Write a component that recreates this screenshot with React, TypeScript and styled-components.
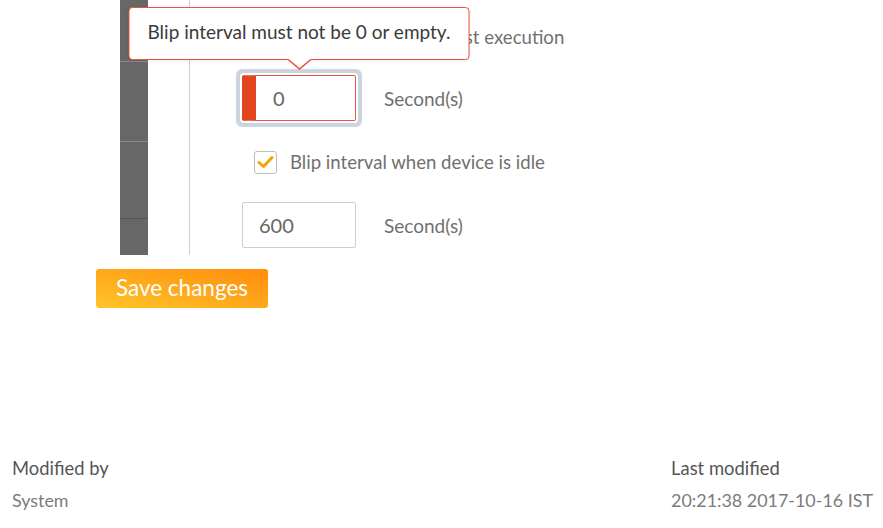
import React from "react";
import styled, { createGlobalStyle } from "styled-components";

const GlobalStyle = createGlobalStyle`
  html, body {
    margin: 0;
    padding: 0;
    background: #ffffff;
  }
  body {
    font-family: Lato, "Open Sans", sans-serif;
    color: #666;
  }
  * { box-sizing: border-box; }
`;

const Page = styled.div`
  display: flex;
  flex-direction: column;
  height: 528px;
  overflow: hidden;
`;

const FormArea = styled.div`
  display: flex;
  padding-left: 120px;
  height: 255px;
`;

const SideStrip = styled.div`
  width: 28px;
  display: flex;
  flex-direction: column;
  background: #666;
`;

const SideItem = styled.div<{ $h: number; $line: string }>`
  height: ${(p) => p.$h}px;
  background: #676767;
  border-top: 1px solid ${(p) => p.$line};
  &:first-child { border-top: none; }
`;

const Settings = styled.div`
  position: relative;
  margin-left: 41px;
  border-left: 1px solid #cfcfcf;
  padding: 25px 0 0 52px;
  flex: 1;
  display: flex;
  flex-direction: column;
`;

const CheckRow = styled.label<{ $mt: number }>`
  display: flex;
  align-items: center;
  gap: 13px;
  margin-left: 12px;
  margin-top: ${(p) => p.$mt}px;
  height: 24px;
  font-size: 18.6px;
  color: #707070;
  white-space: nowrap;
`;

const Box = styled.span`
  width: 23px;
  height: 23px;
  flex: none;
  border: 1px solid #bdbdbd;
  border-radius: 3px;
  background: #fff;
  display: flex;
  align-items: center;
  justify-content: center;
`;

const InputRow = styled.div<{ $mt: number }>`
  display: flex;
  align-items: center;
  gap: 28px;
  margin-top: ${(p) => p.$mt}px;
  height: 46px;
`;

const InputWrap = styled.div`
  position: relative;
  width: 114px;
  height: 46px;
`;

const Field = styled.div<{ $error?: boolean }>`
  width: 114px;
  height: 46px;
  border: 1px solid ${(p) => (p.$error ? "#e8553e" : "#cfcfcf")};
  border-left: ${(p) => (p.$error ? "14px solid #e3451f" : "1px solid #cfcfcf")};
  border-radius: 2px;
  padding-left: ${(p) => (p.$error ? "17px" : "16px")};
  display: flex;
  align-items: center;
  font-size: 20px;
  color: #666;
  background: #fff;
  box-shadow: ${(p) =>
    p.$error ? "0 0 0 2px #fff, 0 0 1px 6px #cbd4de" : "none"};
`;

const Unit = styled.span`
  font-size: 19px;
  color: #707070;
`;

const Tooltip = styled.div`
  position: absolute;
  left: 50%;
  bottom: calc(100% + 15px);
  transform: translateX(-50%);
  width: 341px;
  height: 53px;
  padding-bottom: 4px;
  border: 1px solid #e8553e;
  border-radius: 4px;
  background: #fff;
  display: flex;
  align-items: center;
  justify-content: center;
  font-size: 19px;
  color: #3a3a3a;
  white-space: nowrap;
  z-index: 5;
  box-shadow: 0 1px 3px rgba(0, 0, 0, 0.08);

  &::before,
  &::after {
    content: "";
    position: absolute;
    left: 50%;
    transform: translateX(-50%);
    border-style: solid;
  }
  &::before {
    top: 100%;
    border-width: 11px 13px 0 13px;
    border-color: #e8553e transparent transparent transparent;
  }
  &::after {
    top: calc(100% - 1px);
    border-width: 10px 12px 0 12px;
    border-color: #fff transparent transparent transparent;
  }
`;

const ButtonRow = styled.div`
  padding-left: 96px;
  margin-top: 14px;
`;

const SaveButton = styled.button`
  width: 172px;
  height: 39px;
  border: none;
  border-radius: 3px;
  background: linear-gradient(to top right, #ffc42a, #ff8c0c);
  color: #fff;
  font-family: Lato, "Open Sans", sans-serif;
  font-size: 22.5px;
  padding: 0 0 2px;
  cursor: pointer;
`;

const Footer = styled.div`
  margin-top: auto;
  display: flex;
  justify-content: space-between;
  padding: 0 10px 12px 12px;
`;

const Meta = styled.div`
  display: flex;
  flex-direction: column;
`;

const MetaLabel = styled.div`
  line-height: 32px;
  font-size: 18.4px;
  color: #555;
`;

const MetaValue = styled.div`
  line-height: 32px;
  font-size: 17.9px;
  color: #7c7c7c;
`;

const Check = () => (
  <svg width="17" height="14" viewBox="0 0 17 14">
    <path
      d="M2 7.5 L6.5 11.5 L15 2.5"
      fill="none"
      stroke="#f5a300"
      strokeWidth="3"
      strokeLinecap="round"
      strokeLinejoin="round"
    />
  </svg>
);

export default function App() {
  return (
    <Page>
      <GlobalStyle />
      <FormArea>
        <SideStrip>
          <SideItem $h={61} $line="#8a8a8a" />
          <SideItem $h={80} $line="#8a8a8a" />
          <SideItem $h={77} $line="#8a8a8a" />
          <SideItem $h={37} $line="#555" />
        </SideStrip>
        <Settings>
          <CheckRow $mt={0}>
            <Box>
              <Check />
            </Box>
            Blip interval during test execution
          </CheckRow>
          <InputRow $mt={26}>
            <InputWrap>
              <Tooltip>Blip interval must not be 0 or empty.</Tooltip>
              <Field $error>0</Field>
            </InputWrap>
            <Unit>Second(s)</Unit>
          </InputRow>
          <CheckRow $mt={29}>
            <Box>
              <Check />
            </Box>
            Blip interval when device is idle
          </CheckRow>
          <InputRow $mt={28}>
            <InputWrap>
              <Field>600</Field>
            </InputWrap>
            <Unit>Second(s)</Unit>
          </InputRow>
        </Settings>
      </FormArea>
      <ButtonRow>
        <SaveButton>Save changes</SaveButton>
      </ButtonRow>
      <Footer>
        <Meta>
          <MetaLabel>Modified by</MetaLabel>
          <MetaValue>System</MetaValue>
        </Meta>
        <Meta>
          <MetaLabel>Last modified</MetaLabel>
          <MetaValue>20:21:38 2017-10-16 IST</MetaValue>
        </Meta>
      </Footer>
    </Page>
  );
}
